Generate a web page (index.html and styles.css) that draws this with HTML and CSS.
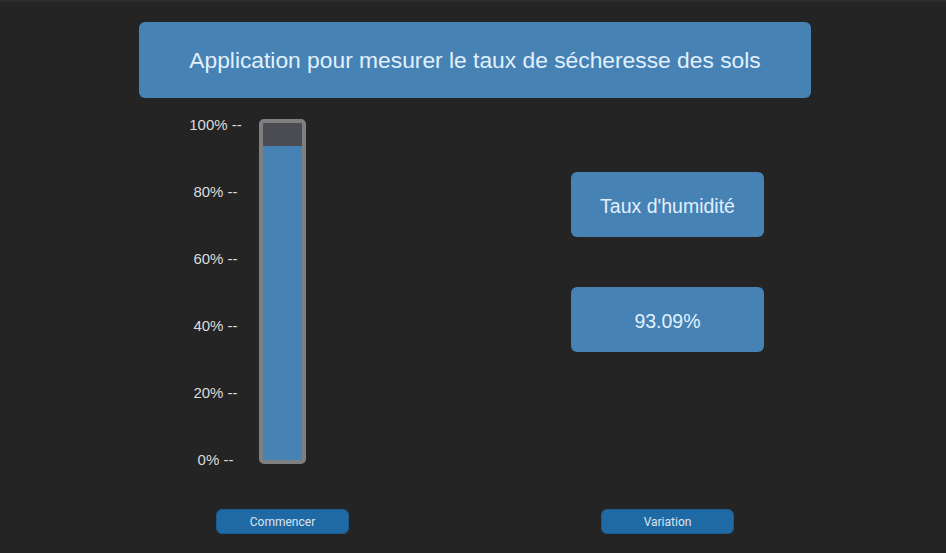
FILE: index.html
```html
<!DOCTYPE html>
<html lang="fr">
<head>
<meta charset="utf-8">
<title>Taux de sécheresse des sols</title>
<link rel="stylesheet" href="styles.css">
</head>
<body>
<div class="window">
  <header class="title">Application pour mesurer le taux de sécheresse des sols</header>
  <main class="content">
    <section class="left">
      <div class="gauge-area">
        <div class="scale">
          <span>100% --</span>
          <span>80% --</span>
          <span>60% --</span>
          <span>40% --</span>
          <span>20% --</span>
          <span>0% --</span>
        </div>
        <div class="gauge">
          <div class="gauge-fill" style="height: 93.09%"></div>
        </div>
      </div>
      <button class="btn">Commencer</button>
    </section>
    <section class="right">
      <div class="card card-label">Taux d'humidité</div>
      <div class="card card-value">93.09%</div>
      <button class="btn btn-right">Variation</button>
    </section>
  </main>
</div>
</body>
</html>
```

FILE: styles.css
```css
* { box-sizing: border-box; }
html, body {
  margin: 0;
  padding: 0;
  height: 100%;
  background: #242424;
}
body {
  font-family: "Liberation Sans", Arial, sans-serif;
  border-top: 2px solid #2c2c2c;
}
.window {
  padding-top: 20px;
}
.title {
  margin-left: 139px;
  width: 672px;
  height: 76px;
  background: #4682b4;
  border-radius: 6px;
  color: #e1f0fd;
  font-size: 22.8px;
  display: flex;
  align-items: center;
  justify-content: center;
  padding-top: 1px;
}
.content {
  display: flex;
  padding-top: 19px;
}
.left {
  margin-left: 189px;
  width: 186px;
  display: flex;
  flex-direction: column;
  align-items: flex-start;
}
.gauge-area {
  display: flex;
  gap: 17px;
  align-items: flex-start;
}
.scale {
  width: 53px;
  height: 351px;
  display: flex;
  flex-direction: column;
  justify-content: space-between;
  align-items: center;
  color: #dcdcdc;
  font-size: 15px;
}
.scale span {
  line-height: 16px;
  white-space: nowrap;
}
.gauge {
  margin-top: 2px;
  width: 47px;
  height: 345px;
  border: 4px solid #7f7f7f;
  border-radius: 5px;
  background: #4a4c51;
  display: flex;
  flex-direction: column;
  justify-content: flex-end;
  overflow: hidden;
}
.gauge-fill {
  background: #4682b4;
}
.btn {
  margin-top: 41px;
  margin-left: 27px;
  width: 133px;
  height: 25px;
  background: #1f6aa5;
  border: 1px solid #1a5b8e;
  border-radius: 6px;
  color: #dce4ee;
  font-family: Roboto, "Liberation Sans", sans-serif;
  font-size: 12px;
  padding: 0;
}
.right {
  margin-left: 196px;
  width: 193px;
  display: flex;
  flex-direction: column;
  align-items: center;
}
.card {
  width: 193px;
  height: 65px;
  background: #4682b4;
  border-radius: 6px;
  color: #e1f0fd;
  font-size: 19.5px;
  display: flex;
  align-items: center;
  justify-content: center;
  padding-top: 3px;
}
.card-label {
  margin-top: 55px;
}
.card-value {
  margin-top: 50px;
}
.btn-right {
  margin-top: 157px;
  margin-left: 0;
}
```
